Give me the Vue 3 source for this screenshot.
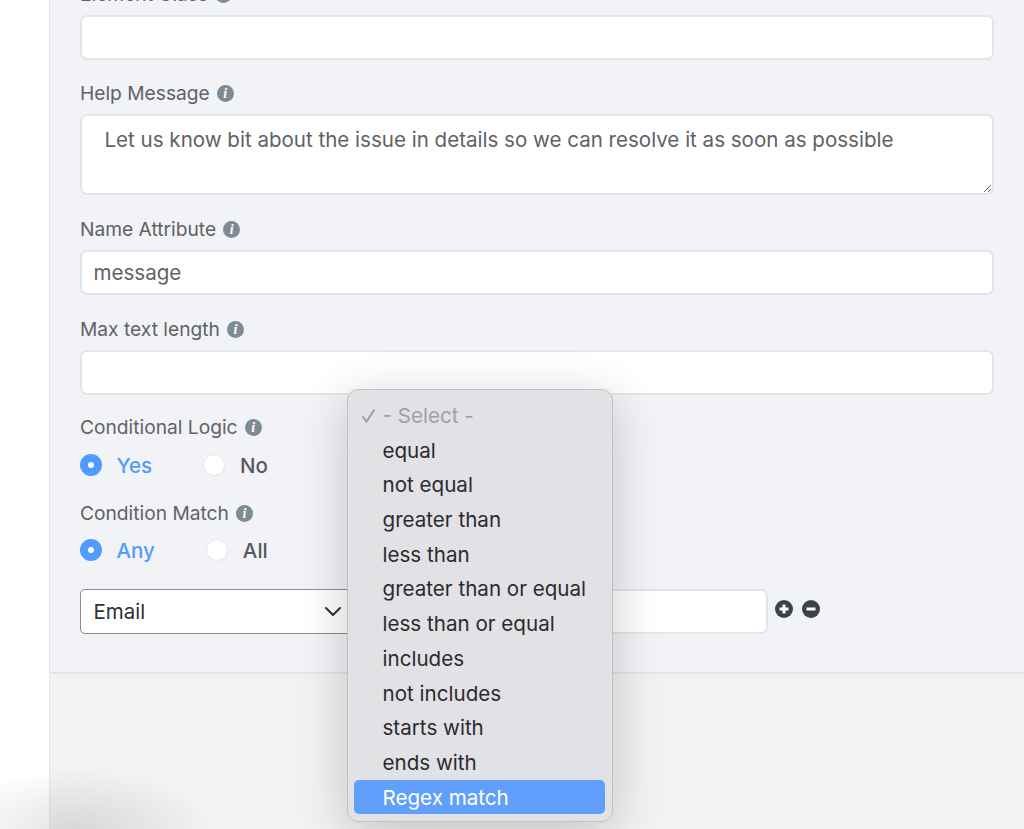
<script setup>
const options = ['equal','not equal','greater than','less than','greater than or equal','less than or equal','includes','not includes','starts with','ends with']
</script>

<template>
  <div class="page">
    <div class="gutter"></div>
    <main class="main">
      <section class="form">
        <div class="field">
          <div class="label">Element Class <span class="info">i</span></div>
          <input class="input" type="text" />
        </div>
        <div class="field tall">
          <div class="label">Help Message <span class="info">i</span></div>
          <textarea class="input area" readonly>Let us know bit about the issue in details so we can resolve it as soon as possible</textarea>
        </div>
        <div class="field tall">
          <div class="label">Name Attribute <span class="info">i</span></div>
          <input class="input" type="text" value="message" />
        </div>
        <div class="field">
          <div class="label">Max text length <span class="info">i</span></div>
          <input class="input" type="text" />
        </div>
        <div class="field radios-field">
          <div class="label raise">Conditional Logic <span class="info">i</span></div>
          <div class="radios">
            <span class="radio on"></span><span class="rlabel first-label on-text">Yes</span>
            <span class="radio second-a"></span><span class="rlabel">No</span>
          </div>
        </div>
        <div class="field radios-field last-radios">
          <div class="label raise">Condition Match <span class="info">i</span></div>
          <div class="radios">
            <span class="radio on"></span><span class="rlabel first-label on-text">Any</span>
            <span class="radio second-b"></span><span class="rlabel">All</span>
          </div>
        </div>
        <div class="cond-row">
          <div class="select">
            <span>Email</span>
            <svg class="chev" width="18" height="11" viewBox="0 0 18 11"><path d="M2 2l7 7 7-7" fill="none" stroke="#2f3237" stroke-width="2" stroke-linecap="round" stroke-linejoin="round"/></svg>
          </div>
          <div class="value"></div>
          <svg class="act first" width="18" height="18" viewBox="0 0 18 18"><circle cx="9" cy="9" r="9" fill="#3c4248"/><path d="M9 4.5v9M4.5 9h9" stroke="#fff" stroke-width="3"/></svg>
          <svg class="act" width="18" height="18" viewBox="0 0 18 18"><circle cx="9" cy="9" r="9" fill="#3c4248"/><path d="M4.5 9h9" stroke="#fff" stroke-width="3"/></svg>
        </div>
      </section>
      <footer class="footer"></footer>
    </main>

    <div class="menu">
      <div class="opt muted"><svg class="check" width="15" height="15" viewBox="0 0 15 15"><path d="M1.5 8.5l4 5 8-12" fill="none" stroke="#9c9ca1" stroke-width="2"/></svg>- Select -</div>
      <div v-for="o in options" :key="o" class="opt">{{ o }}</div>
      <div class="opt active">Regex match</div>
    </div>
    <div class="bottom-shade"></div>
  </div>
</template>

<style>
html, body { margin: 0; overflow: hidden; background: #fff; }
</style>

<style scoped>
.page {
  position: relative;
  display: flex;
  width: 1024px;
  height: 829px;
  overflow: hidden;
  background: #fff;
  font-family: Inter, "Liberation Sans", sans-serif;
  color: #606266;
}
.gutter { width: 49px; flex: none; }
.main {
  flex: 1;
  display: flex;
  flex-direction: column;
  border-left: 1.5px solid #e6e7ea;
  min-width: 0;
}
.form {
  background: #f2f3f6;
  margin-top: -39px;
  padding: 21px 30px 38px 29.5px;
  border-bottom: 2px solid #e3e4e6;
}
.footer { flex: 1; background: #f2f2f2; }
.field { margin-bottom: 21px; }
.tall { margin-bottom: 22px; }
.radios-field { margin-bottom: 20px; }
.last-radios { margin-bottom: 22px; }
.radios-field .label { margin-bottom: 8px; }
.last-radios .radios { margin-top: -1px; }
.label {
  display: flex;
  align-items: center;
  gap: 7px;
  box-sizing: border-box;
  height: 24px;
  margin-bottom: 9px;
  padding-left: 0.5px;
  font-size: 19.2px;
  line-height: 24px;
}
.raise { padding-bottom: 2px; }
.info {
  width: 17px;
  height: 17px;
  border-radius: 50%;
  background: #7d8b95;
  color: #fff;
  font: italic bold 14px/17px "Liberation Serif", serif;
  text-align: center;
  flex: none;
}
.input {
  display: block;
  box-sizing: border-box;
  width: 100%;
  height: 45px;
  padding: 0 12px;
  border: 2px solid #e3e5ea;
  border-radius: 7px;
  background: #fff;
  outline: none;
  font-family: inherit;
  font-size: 20.55px;
  color: #606266;
}
.area {
  height: 81px;
  padding: 9px 23px;
  line-height: 30px;
  resize: vertical;
}
.radios { display: flex; align-items: center; height: 34px; }
.radio {
  box-sizing: border-box;
  width: 22px;
  height: 22px;
  border-radius: 50%;
  background: #fff;
  border: 1.5px solid #e3e5ea;
  flex: none;
}
.radio.on { background: #4f9bff; border: 8px solid #4f9bff; }
.radio.on::after {
  content: "";
  display: block;
  width: 6px;
  height: 6px;
  background: #fff;
  border-radius: 50%;
}
.rlabel { margin-left: 15px; font-size: 20.5px; font-weight: 500; color: #55585d; }
.first-label { margin-left: 15px; }
.on-text { color: #4f9bff; }
.second-a { margin-left: 51px; }
.second-b { margin-left: 51px; }
.cond-row { display: flex; align-items: center; }
.select {
  box-sizing: border-box;
  display: flex;
  align-items: center;
  justify-content: space-between;
  width: 272px;
  height: 45px;
  padding: 0 9px 0 13px;
  border: 1.5px solid #8a8c8f;
  border-radius: 5px;
  background: #fff;
  font-size: 20.5px;
  color: #2f3237;
}
.value {
  box-sizing: border-box;
  width: 416.5px;
  height: 45px;
  border: 2px solid #e3e5ea;
  border-radius: 7px;
  background: #fff;
}
.act { margin-left: 9px; margin-top: -5px; }
.act.first { margin-left: 7px; }
.menu {
  position: absolute;
  left: 346.5px;
  top: 389px;
  box-sizing: border-box;
  width: 266px;
  height: 433px;
  padding: 8px 7px 8px 6.5px;
  border-radius: 11px;
  border: 1px solid #c2c2c5;
  background: #e2e1e6;
  box-shadow: 0 10px 50px rgba(0, 0, 0, 0.2);
}
.opt {
  position: relative;
  height: 34.7px;
  line-height: 35.2px;
  padding-left: 28.5px;
  font-size: 20.6px;
  color: #2b2b2d;
  border-radius: 5px;
}
.muted { color: #a0a0a5; }
.check { position: absolute; left: 7px; top: 10px; }
.active { background: #609ffb; color: #fff; }
.bottom-shade {
  position: absolute;
  left: 0;
  right: 0;
  bottom: 0;
  height: 60px;
  pointer-events: none;
  background: radial-gradient(ellipse 135px 60px at 75px 100%, rgba(0,0,0,0.11), rgba(0,0,0,0) 100%);
}
</style>
